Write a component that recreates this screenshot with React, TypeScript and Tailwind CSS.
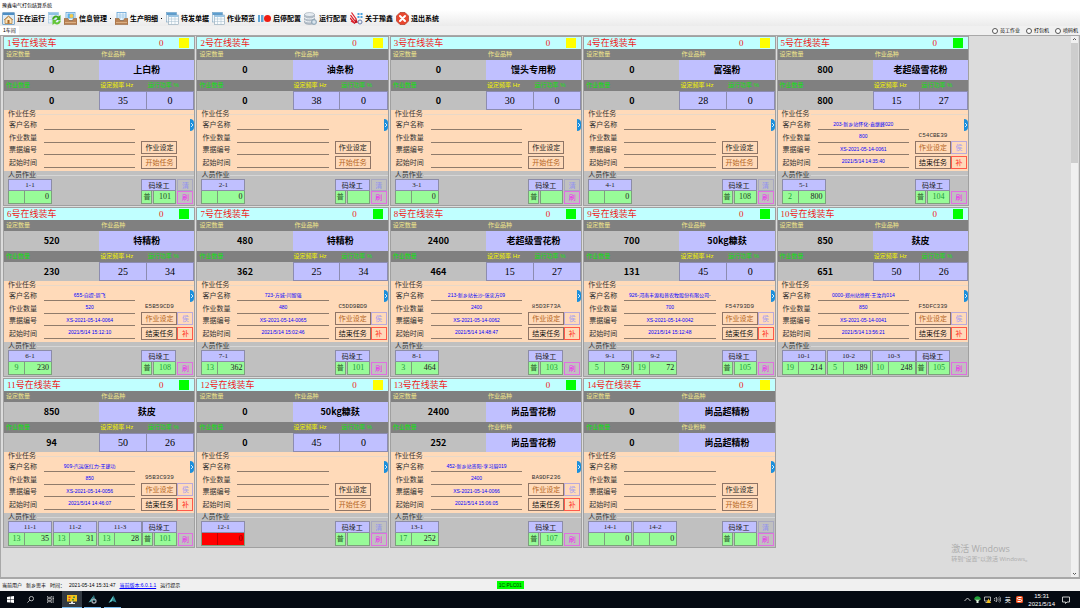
import type { ReactNode } from "react";

type Member = { name: string; rank?: string; count?: string; alarm?: boolean };

type Task = {
  customer: string;
  amount: string;
  bill: string;
  start: string;
  code: string;
};

type Line = {
  id: number;
  target: string;
  product: string;
  done: string;
  // without a frequency the line shows its flour kind instead
  freq?: string;
  power?: string;
  ready?: boolean;
  task?: Task;
  crew: Member[];
  stacker?: string;
};

const lines: Line[] = [
  { id: 1, target: "0", product: "上白粉", done: "0", freq: "35", power: "0", crew: [{ name: "1-1", count: "0" }], stacker: "101" },
  { id: 2, target: "0", product: "油条粉", done: "0", freq: "38", power: "0", crew: [{ name: "2-1", count: "0" }] },
  { id: 3, target: "0", product: "馒头专用粉", done: "0", freq: "30", power: "0", crew: [{ name: "3-1", count: "0" }] },
  { id: 4, target: "0", product: "富强粉", done: "0", freq: "28", power: "0", crew: [{ name: "4-1", count: "0" }], stacker: "108" },
  {
    id: 5, target: "800", product: "老超级雪花粉", done: "800", freq: "15", power: "27", ready: true,
    task: { customer: "203-新乡站怀化-袁继峰020", amount: "800", bill: "XS-2021-05-14-0061", start: "2021/5/14 14:35:40", code: "C54CBE39" },
    crew: [{ name: "5-1", rank: "2", count: "800" }], stacker: "104",
  },
  {
    id: 6, target: "520", product: "特精粉", done: "230", freq: "25", power: "34", ready: true,
    task: { customer: "655-自提-周飞", amount: "520", bill: "XS-2021-05-14-0064", start: "2021/5/14 15:12:10", code: "E5B59CD9" },
    crew: [{ name: "6-1", rank: "9", count: "230" }], stacker: "108",
  },
  {
    id: 7, target: "480", product: "特精粉", done: "362", freq: "25", power: "34", ready: true,
    task: { customer: "723-方城-闫留强", amount: "480", bill: "XS-2021-05-14-0065", start: "2021/5/14 15:02:46", code: "C5DD9BD9" },
    crew: [{ name: "7-1", rank: "13", count: "362" }], stacker: "101",
  },
  {
    id: 8, target: "2400", product: "老超级雪花粉", done: "464", freq: "15", power: "27", ready: true,
    task: { customer: "213-新乡站长沙-张忠方09", amount: "2400", bill: "XS-2021-05-14-0062", start: "2021/5/14 14:48:47", code: "85D3F73A" },
    crew: [{ name: "8-1", rank: "3", count: "464" }], stacker: "103",
  },
  {
    id: 9, target: "700", product: "50kg糠麸", done: "131", freq: "45", power: "0", ready: true,
    task: { customer: "926-河南丰源和普农牧股份有限公司-", amount: "700", bill: "XS-2021-05-14-0042", start: "2021/5/14 15:12:48", code: "F54793D9" },
    crew: [{ name: "9-1", rank: "5", count: "59" }, { name: "9-2", rank: "19", count: "72" }], stacker: "105",
  },
  {
    id: 10, target: "850", product: "麸皮", done: "651", freq: "50", power: "26", ready: true,
    task: { customer: "0000-郑州站徐辉-王汝冉014", amount: "850", bill: "XS-2021-05-14-0041", start: "2021/5/14 13:56:21", code: "F5DFC339" },
    crew: [
      { name: "10-1", rank: "19", count: "214" },
      { name: "10-2", rank: "5", count: "189" },
      { name: "10-3", rank: "10", count: "248" },
    ],
    stacker: "105",
  },
  {
    id: 11, target: "850", product: "麸皮", done: "94", freq: "50", power: "26", ready: true,
    task: { customer: "909-汽运张红力-王建功", amount: "850", bill: "XS-2021-05-14-0056", start: "2021/5/14 14:46:07", code: "95B3C939" },
    crew: [
      { name: "11-1", rank: "13", count: "35" },
      { name: "11-2", rank: "13", count: "31" },
      { name: "11-3", rank: "13", count: "28" },
    ],
    stacker: "101",
  },
  { id: 12, target: "0", product: "50kg糠麸", done: "0", freq: "45", power: "0", crew: [{ name: "12-1", count: "0", alarm: true }] },
  {
    id: 13, target: "2400", product: "尚品雪花粉", done: "252", ready: true,
    task: { customer: "452-新乡站贵阳-李习眉019", amount: "2400", bill: "XS-2021-05-14-0066", start: "2021/5/14 15:06:05", code: "BA9DF236" },
    crew: [{ name: "13-1", rank: "17", count: "252" }], stacker: "107",
  },
  { id: 14, target: "0", product: "尚品超精粉", done: "0", crew: [{ name: "14-1", count: "0" }, { name: "14-2", count: "0" }] },
];

const HomeIcon = () => (
  <svg viewBox="0 0 26 26" className="size-[13px] shrink-0">
    <rect x="1" y="1" width="24" height="24" rx="1" fill="#dcecf8" stroke="#5f93bd" strokeWidth="1.5" />
    <rect x="2" y="2" width="22" height="4" fill="#4d8ec4" />
    <path d="M6 15l7-6 7 6v8H6z" fill="#fbe3b8" stroke="#b98138" strokeWidth="1.5" />
    <path d="M4 16l9-8 9 8" fill="none" stroke="#b98a55" strokeWidth="2" />
    <rect x="11" y="16" width="4" height="7" fill="#a8672b" />
  </svg>
);

const RefreshIcon = () => (
  <svg viewBox="0 0 26 26" className="size-[13px] shrink-0">
    <rect x="1" y="1" width="20" height="21" fill="#e6f2fa" stroke="#8bb9da" />
    <path d="M1 10h20M1 15h20M8 1v20M14 1v20" stroke="#a9cbe2" />
    <rect x="1" y="1" width="20" height="5" fill="#8fc1e4" />
    <path d="M8 15c1-8 9-10 13-6l4-3v10h-9l3-4c-3-2-6-1-7 3z" fill="#3faa22" />
    <path d="M26 17c-1 8-9 10-13 6l-4 3V16h9l-3 4c3 2 6 1 7-3z" fill="#65c637" />
  </svg>
);

const TrayIcon = ({ photo }: { photo?: boolean }) => (
  <svg viewBox="0 0 26 26" className="size-[13px] shrink-0">
    <rect x="4" y="1" width="18" height="16" fill="#eaf5fd" stroke="#5f9fd4" strokeWidth="1.5" />
    {photo ? (
      <>
        <rect x="7" y="3" width="13" height="10" fill="#5db2ee" />
        <circle cx="15" cy="8" r="4" fill="#f7c948" />
      </>
    ) : (
      <path d="M5 6h17M5 10h17M10 1v14M16 1v14" stroke="#7db4de" />
    )}
    <path d="M0 13h8l2 4h7l2-4h7v12H0z" fill="#b98356" stroke="#8a5a2e" />
    <path d="M2 21h22" stroke="#dbb083" strokeWidth="2" />
  </svg>
);

const SheetIcon = () => (
  <svg viewBox="0 0 26 26" className="size-[13px] shrink-0">
    <rect x="1" y="1" width="20" height="19" fill="#eef6fb" stroke="#6f97b5" />
    <rect x="1" y="1" width="20" height="5" fill="#5c9ed0" />
    <rect x="5" y="6" width="20" height="19" fill="#f8fbfd" stroke="#7893a8" />
    <path d="M5 14h20M5 19h20M11 8v17M18 8v17" stroke="#a4bccd" />
    <rect x="5" y="6" width="20" height="4" fill="#9cc6e4" />
  </svg>
);

const RecordIcon = () => (
  <svg viewBox="0 0 26 26" className="size-[13px] shrink-0">
    <rect x="0" y="6" width="4" height="14" fill="#5fa5d4" />
    <rect x="6" y="6" width="5" height="14" fill="#5fa5d4" />
    <circle cx="19" cy="13" r="7" fill="#ee1c12" />
  </svg>
);

const DatabaseIcon = () => (
  <svg viewBox="0 0 26 26" className="size-[13px] shrink-0">
    <path d="M1 5v16c0 5 20 5 20 0V5z" fill="#b3bec8" stroke="#8997a4" />
    <ellipse cx="11" cy="5" rx="10" ry="4" fill="#e6ecf1" stroke="#8997a4" />
    <path d="M1 10c0 5 20 5 20 0M1 16c0 5 20 5 20 0" fill="none" stroke="#f2f5f8" strokeWidth="2" />
    <circle cx="20" cy="20" r="5" fill="#c3d4e0" stroke="#7d95a8" strokeWidth="1.5" />
    <circle cx="20" cy="20" r="1.5" fill="#fff" />
  </svg>
);

const AboutIcon = () => (
  <svg viewBox="0 0 26 26" className="size-[13px] shrink-0">
    <path d="M3 1l10 14M1 6l9 12M0 12l8 9M2 18l8 5" stroke="#dd1f2a" strokeWidth="2.500" />
    <path d="M12 13l4 8-8 2z" fill="#c0101c" />
    <path d="M15 2h4v4h-4zM21 2h4v4h-4zM15 8h4v4h-4zM21 8h4v4h-4z" fill="#4aa3df" />
    <circle cx="20" cy="20" r="4" fill="none" stroke="#6d7fae" strokeWidth="2" />
  </svg>
);

const ExitIcon = () => (
  <svg viewBox="0 0 26 26" className="size-[13px] shrink-0">
    <path d="M8 1h10l7 7v10l-7 7H8l-7-7V8z" fill="#e8472f" stroke="#b3402c" strokeWidth="1.5" />
    <path d="M8 8l10 10M18 8L8 18" stroke="#fff" strokeWidth="4" strokeLinecap="round" />
  </svg>
);

const tools: { label: string; icon: ReactNode; menu?: boolean }[] = [
  { label: "正在运行", icon: <HomeIcon /> },
  { label: "", icon: <RefreshIcon /> },
  { label: "信息管理", icon: <TrayIcon photo />, menu: true },
  { label: "生产明细", icon: <TrayIcon />, menu: true },
  { label: "待发单据", icon: <SheetIcon /> },
  { label: "作业预览", icon: <SheetIcon /> },
  { label: "启停配置", icon: <RecordIcon /> },
  { label: "运行配置", icon: <DatabaseIcon /> },
  { label: "关于豫鑫", icon: <AboutIcon /> },
  { label: "退出系统", icon: <ExitIcon /> },
];

const Toolbar = () => (
  <nav className="flex h-4 items-center gap-[3px] bg-linear-to-b from-white to-[#ebebeb] pl-[2px]">
    {tools.map((tool, i) => (
      <button key={i} aria-label={tool.label || "刷新"} className="flex items-center gap-[2px] whitespace-nowrap text-[7px] leading-[10px] font-bold">
        {tool.icon}
        {tool.label && <span>{tool.label}</span>}
        {tool.menu && <i className="mx-px size-px bg-black" />}
      </button>
    ))}
  </nav>
);

const Field = ({ id, label, value }: { id: string; label: string; value?: string }) => (
  <div className="flex h-3">
    <label htmlFor={id} className="w-[35px] text-[7px] leading-[14px] text-[#333]">
      {label}
    </label>
    <input
      id={id}
      readOnly
      value={value ?? ""}
      className="h-3 min-w-0 flex-1 border-b border-[#8f7b6b] bg-transparent text-center text-[5px] leading-[8px] text-[#0000ff] outline-none"
    />
  </div>
);

const GroupTitle = ({ children, rule }: { children: ReactNode; rule: string }) => (
  <div className="flex h-2 items-center gap-px pl-1">
    <h3 className="text-[7px] leading-[8px] text-[#333]">{children}</h3>
    <i className={`h-px flex-1 ${rule}`} />
  </div>
);

const TaskPanel = ({ id, task }: { id: number; task?: Task }) => (
  <section className="relative h-[61px] bg-[#ffdab9]">
    <GroupTitle rule="bg-[#e8d8c8]">作业任务</GroupTitle>
    <div className="flex h-[51px] gap-[6px] pr-px pl-[5px]">
      <div className="flex flex-1 flex-col justify-between pb-px">
        <Field id={`customer-${id}`} label="客户名称" value={task?.customer} />
        <Field id={`amount-${id}`} label="作业数量" value={task?.amount} />
        <Field id={`bill-${id}`} label="票据编号" value={task?.bill} />
        <Field id={`start-${id}`} label="起始时间" value={task?.start} />
      </div>
      <div className="flex w-[52px] flex-col justify-end gap-[2px]">
        {task && <p className="w-9 text-center font-mono text-[6px] leading-[7px] text-[#333]">{task.code}</p>}
        <div className="flex h-[13px]">
          <button className={`w-9 border border-[#8f7566] text-[7px] leading-[11px] ${task ? "text-[#b5651d]" : "text-[#222]"}`}>作业设定</button>
          {task && <button className="flex-1 border border-[#b9a9d9] text-[7px] leading-[11px] text-[#a9a0ee]">侯</button>}
        </div>
        <div className="flex h-[13px]">
          <button className={`w-9 border border-[#8f7566] text-[7px] leading-[11px] ${task ? "text-[#111]" : "text-[#b5651d]"}`}>
            {task ? "结束任务" : "开始任务"}
          </button>
          {task && <button className="flex-1 border border-[#ff5a4a] text-[7px] leading-[11px] text-[#ff2a1a]">补</button>}
        </div>
      </div>
    </div>
    <button aria-label="展开" className="absolute top-[9px] right-0 h-3 w-1 rounded-r-sm bg-[#1b8fdc]">
      <svg viewBox="0 0 4 12" className="h-3 w-1">
        <path d="M1 4l2 2-2 2" fill="none" stroke="#fff" strokeWidth="0.8" />
      </svg>
    </button>
  </section>
);

const CrewPanel = ({ line }: { line: Line }) => (
  <section className="h-[34px] bg-[#c0c0c0]">
    <GroupTitle rule="bg-[#d6d6d6]">人员作业</GroupTitle>
    <div className="flex pr-px pl-1 text-[7px] leading-[11px]">
      <div className="flex flex-1 gap-px">
        {line.crew.map((m) => (
          <div key={m.name} className="w-11">
            <div className="h-3 border border-[#8c8ca8] bg-[#c0c0ff] text-center font-num text-[#222]">{m.name}</div>
            <div className={`flex h-[13px] border border-t-0 border-[#7da07d] font-num text-[8px] leading-[12px] ${m.alarm ? "bg-[#ff0000]" : "bg-[#98fb98]"}`}>
              <span className={`w-4 border-r text-center text-[#1f9a3a] ${m.alarm ? "border-[#c00000]" : "border-[#7da07d]"}`}>{m.rank}</span>
              <span className={`flex-1 pr-[2px] text-right ${m.alarm ? "text-[#700]" : "text-[#222]"}`}>{m.count}</span>
            </div>
          </div>
        ))}
      </div>
      <div className="w-[35px]">
        <div className="h-3 border border-[#8c8ca8] bg-[#c0c0ff] text-center text-[#222]">码垛工</div>
        <div className="flex h-[13px] gap-px leading-[12px]">
          <span className="w-[11px] border border-t-0 border-[#7da07d] bg-[#98fb98] text-center text-[#2a5a2a]">普</span>
          <span className={`flex-1 border border-t-0 border-[#7da07d] bg-[#98fb98] text-center font-num text-[8px] ${line.task ? "text-[#1f9a3a]" : "text-[#244a24]"}`}>
            {line.stacker}
          </span>
        </div>
      </div>
      <div className="flex w-[17px] flex-col justify-end pl-px">
        {!line.task && <button className="h-3 border border-[#a8a8c0] text-[#9292f0]">清</button>}
        <button className="h-[13px] border border-[#e070e0] text-[#f02af0]">刷</button>
      </div>
    </div>
  </section>
);

const LineCard = ({ line }: { line: Line }) => (
  <article className="border border-[#a0a0a0]">
    <header className="flex h-3 items-center bg-[#c0ffff] pr-[5px] pl-[3px] text-[#f01818]">
      <h2 className="font-num flex-1 text-[9px] leading-[12px]">{line.id}号在线装车</h2>
      <span className="font-num mr-4 text-[9px] leading-[12px]">0</span>
      <i className={`size-[10px] ${line.ready ? "bg-[#00ff00]" : "bg-[#ffff00]"}`} />
    </header>
    <div className="grid h-[11px] grid-cols-2 bg-[#808080] text-[6px] leading-[11px] text-[#f0e68c]">
      <span className="pl-[2px]">设定数量</span>
      <span className="pl-[2px]">作业品种</span>
    </div>
    <div className="grid h-5 grid-cols-2 text-center text-[9px] leading-[20px] font-bold">
      <span className="bg-[#c0c0c0]">{line.target}</span>
      <span className="bg-[#c0c0ff]">{line.product}</span>
    </div>
    <div className="grid h-[11px] grid-cols-4 bg-[#808080] text-[6px] leading-[11px] whitespace-nowrap text-[#10e010]">
      <span className="col-span-2 pl-[2px]">作业数量</span>
      {line.freq ? (
        <>
          <span className="pl-px text-[#f5f500]">设定频率 Hz</span>
          <span className="pl-px">运行功率 %</span>
        </>
      ) : (
        <span className="col-span-2 pl-[2px] text-[#f0e68c]">作业粉种</span>
      )}
    </div>
    <div className="grid h-[19px] grid-cols-4 text-center text-[9px] leading-[19px]">
      <span className="col-span-2 bg-[#c0c0c0] font-bold">{line.done}</span>
      {line.freq ? (
        <>
          <span className="font-num border border-[#8c8cb0] bg-[#c0c0ff] text-[10px] leading-[17px]">{line.freq}</span>
          <span className="font-num border border-l-0 border-[#8c8cb0] bg-[#c0c0ff] text-[10px] leading-[17px]">{line.power}</span>
        </>
      ) : (
        <span className="col-span-2 bg-[#c0c0ff] font-bold">{line.product}</span>
      )}
    </div>
    <TaskPanel id={line.id} task={line.task} />
    <CrewPanel line={line} />
  </article>
);

const ModeRadio = ({ label }: { label: string }) => (
  <label className="flex items-center gap-[2px]">
    <input type="radio" name="mode" className="size-[6px] appearance-none rounded-full border border-[#555] bg-white checked:bg-[#555]" />
    {label}
  </label>
);

const Taskbar = () => (
  <footer className="flex h-[17px] items-center bg-[#050a12] text-white">
    <div className="flex h-full items-center">
      <button aria-label="开始" className="flex w-5 justify-center">
        <svg viewBox="0 0 16 16" className="size-[7px]" fill="#fff">
          <path d="M0 2l7-1v6.500H0zM8 1l8-1v7.500H8zM0 8.500h7V15l-7-1zM8 8.500h8V16l-8-1z" />
        </svg>
      </button>
      <button aria-label="搜索" className="flex w-5 justify-center">
        <svg viewBox="0 0 16 16" className="size-[7px]" fill="none" stroke="#ddd" strokeWidth="1.800">
          <circle cx="10" cy="6" r="5" />
          <path d="M6.500 9.500L1 15" />
        </svg>
      </button>
      <button aria-label="任务视图" className="flex w-5 justify-center">
        <svg viewBox="0 0 16 16" className="size-[7px]" fill="none" stroke="#ddd" strokeWidth="1.600">
          <path d="M1 0v3h9V0M1 16v-3h9v3M1 6h9v4H1zM14 0v16M13 6h3" />
        </svg>
      </button>
      <button aria-label="豫鑫电气" className="ml-[2px] flex h-full w-5 items-center justify-center border-b border-[#76b9ed] bg-[#333a42]">
        <svg viewBox="0 0 20 18" className="h-[9px] w-[10px]">
          <rect width="20" height="13" fill="#f2c21a" />
          <path d="M3 3h4v3H3zM3 8h3v3H3z" fill="#d8402a" />
          <path d="M12 3h4v3h-4zM10 8h4v3h-4z" fill="#3f8f4a" />
          <path d="M8 13h4v3h4v2H4v-2h4z" fill="#e8e8e8" />
        </svg>
      </button>
      <button aria-label="服务" className="ml-[2px] flex h-full w-[17px] items-center justify-center border-b border-[#76b9ed]">
        <svg viewBox="0 0 18 18" className="size-[9px]">
          <path d="M12 0L1 15l6-2z" fill="#58b5b8" />
          <path d="M12 0l3 12-7-1z" fill="#2f7f8b" />
          <circle cx="12" cy="12" r="4" fill="none" stroke="#a5adb4" strokeWidth="2.500" />
        </svg>
      </button>
      <button aria-label="客户端" className="ml-[3px] flex h-full w-[17px] items-center justify-center border-b border-[#76b9ed]">
        <svg viewBox="0 0 18 18" className="size-[9px]">
          <path d="M11 1L1 16l8-4z" fill="#66cfd0" />
          <path d="M11 1l6 14-8-3z" fill="#2e8d96" />
        </svg>
      </button>
    </div>
    <div className="ml-auto flex h-full items-center gap-[3px] pr-[10px]">
      <svg viewBox="0 0 14 14" className="size-[7px]" fill="none" stroke="#ddd" strokeWidth="1.800">
        <path d="M1 10l6-6 6 6" />
      </svg>
      <svg viewBox="0 0 14 14" className="size-[7px]">
        <path d="M0 7c1-9 13-9 14 0z" fill="#23a53b" />
        <path d="M1 7h12l-4 3H5z" fill="#a6e8a6" />
        <rect x="5" y="9" width="4" height="5" fill="#e6efe6" />
      </svg>
      <svg viewBox="0 0 14 14" className="size-[7px]">
        <path d="M1 2h12v8H1zM3 13h5" fill="none" stroke="#ddd" strokeWidth="1.500" />
        <path d="M9 5l5 9H5z" fill="#f5c21b" />
      </svg>
      <svg viewBox="0 0 14 14" className="size-[7px]" fill="none" stroke="#ddd" strokeWidth="1.200">
        <path d="M0 5h2l3-3v10L2 9H0zM7 5c1 1 1 3 0 4M9 3c2 2 2 6 0 8M11 1c3 3 3 9 0 12" />
      </svg>
      <span className="w-[7px] text-center text-[6px] leading-[8px]">英</span>
      <svg viewBox="0 0 14 14" className="ml-[2px] size-[7px]">
        <rect width="14" height="14" rx="3" fill="#f0501e" />
        <path d="M11 3H5C2 3 2 7 5 7h4c3 0 3 4 0 4H3" fill="none" stroke="#fff" strokeWidth="2" />
      </svg>
      <time className="mr-[4px] ml-[2px] text-center text-[6px] leading-[8px]">
        15:31
        <br />
        2021/5/14
      </time>
      <svg viewBox="0 0 16 16" className="size-2" fill="none" stroke="#ddd" strokeWidth="1.800">
        <path d="M1 2h14v10h-5l-3 3v-3H1z" />
      </svg>
    </div>
  </footer>
);

export default function App() {
  return (
    <div className="flex min-h-screen flex-col overflow-hidden bg-[#f0f0f0] font-['Liberation_Sans','Noto_Sans_CJK_SC',sans-serif] text-black [&_.font-bold]:font-['Noto_Sans_CJK_SC',sans-serif] [&_.font-mono]:font-['Liberation_Mono',monospace] [&_.font-num]:font-['Liberation_Serif','Noto_Sans_CJK_SC',serif]">
      <h1 className="h-[10px] bg-white pl-[2px] text-[5px] leading-[10px]">豫鑫电气打包结算系统</h1>
      <Toolbar />
      <div className="flex h-[9px] items-center justify-between text-[5px] leading-[9px]">
        <button className="h-full bg-white px-[3px]">1车间</button>
        <div className="flex gap-[6px] pr-[2px]">
          <ModeRadio label="员工作业" />
          <ModeRadio label="打包机" />
          <ModeRadio label="喷码机" />
        </div>
      </div>

      <main className="relative flex flex-1 border border-b-2 border-[#a8a8a8] bg-[#dcdcdc] pr-px">
        <div className="flex-1 pr-[102px] pl-[2px]">
          <div className="grid grid-cols-5 gap-px">
            {lines.map((line) => (
              <LineCard key={line.id} line={line} />
            ))}
          </div>
        </div>
        <div className="flex w-[7px] flex-col items-center bg-[#f0f0f0]">
          <svg viewBox="0 0 7 7" className="size-[7px]" fill="none" stroke="#555">
            <path d="M2 4l1.500-1.500L5 4" />
          </svg>
          <i className="h-[120px] w-full bg-[#cdcdcd]" />
          <svg viewBox="0 0 7 7" className="mt-auto size-[7px]" fill="none" stroke="#555">
            <path d="M2 3l1.500 1.500L5 3" />
          </svg>
        </div>
        <div className="absolute right-[48px] bottom-[13px] font-['Open_Sans','Noto_Sans_CJK_SC',sans-serif] text-[#acacac]">
          <p className="text-[9px] leading-[12px]">激活 Windows</p>
          <p className="text-[6px] leading-[9px]">转到"设置"以激活 Windows。</p>
        </div>
      </main>

      <div className="relative flex h-3 items-center gap-1 pl-[2px] text-[5px] leading-[10px]">
        <span>当前用户</span>
        <span>新乡思丰</span>
        <span>时间：</span>
        <span>2021-05-14 15:31:47</span>
        <a href="#version" className="text-[#0000ff] underline">
          当前版本:6.0.1.1
        </a>
        <span>运行提示</span>
        <span className="absolute left-[46%] h-2 bg-[#00ff00] px-[2px] text-[5px] leading-[8px] text-[#003c00]">1C:PLC01</span>
      </div>
      <Taskbar />
    </div>
  );
}
